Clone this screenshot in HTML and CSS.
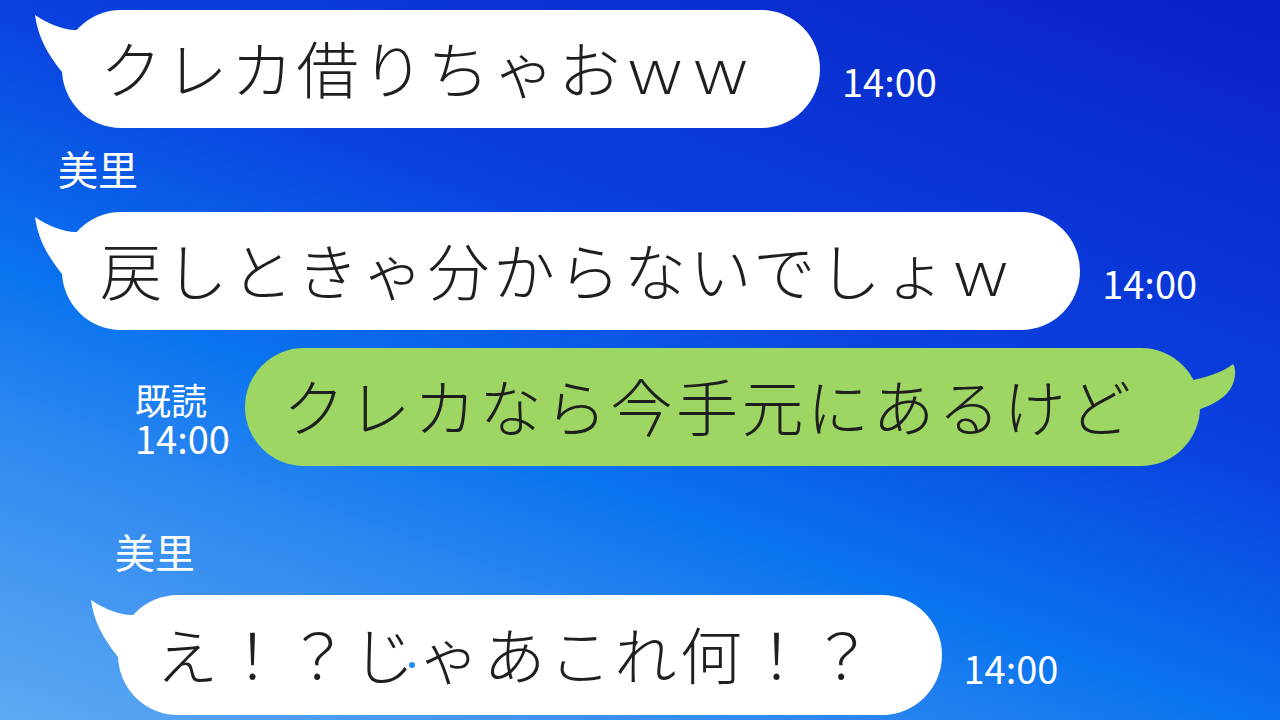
FILE: index.html
```html
<!DOCTYPE html>
<html lang="ja">
<head>
<meta charset="utf-8">
<title>chat</title>
<link rel="stylesheet" href="styles.css">
</head>
<body>
<main class="chat">
  <div class="row r1">
    <div class="bubble white">
      <svg class="tail-l" viewBox="0 0 80 62" aria-hidden="true"><path d="M3 5 C15 13 30 20 44 20 C54 20 62 12 74 5 L80 62 L30 62 C14 42 6 26 3 5 Z"/></svg>
      クレカ借りちゃおｗｗ
    </div>
    <span class="time">14:00</span>
  </div>
  <div class="name n1">美里</div>
  <div class="row r2">
    <div class="bubble white">
      <svg class="tail-l" viewBox="0 0 80 62" aria-hidden="true"><path d="M3 5 C15 13 30 20 44 20 C54 20 62 12 74 5 L80 62 L30 62 C14 42 6 26 3 5 Z"/></svg>
      戻しときゃ分からないでしょｗ
    </div>
    <span class="time">14:00</span>
  </div>
  <div class="row out">
    <div class="meta"><span class="read">既読</span><span class="time-s">14:00</span></div>
    <div class="bubble green">
      <svg class="tail-r" viewBox="0 0 80 70" aria-hidden="true"><path d="M33 32 C52 28 66 22 73 16 C76 20 76 30 72 38 C66 50 54 56 38 62 L20 62 L20 30 Z"/></svg>
      クレカなら今手元にあるけど
    </div>
  </div>
  <div class="name n2">美里</div>
  <div class="row r4">
    <div class="bubble white tall">
      <svg class="tail-l" viewBox="0 0 80 62" aria-hidden="true"><path d="M3 5 C15 13 30 20 44 20 C54 20 62 12 74 5 L80 62 L30 62 C14 42 6 26 3 5 Z"/></svg>
      え！？じゃあこれ何！？
      <span class="dot"></span>
    </div>
    <span class="time">14:00</span>
  </div>
</main>
</body>
</html>
```

FILE: styles.css
```css
html, body {
  margin: 0;
  padding: 0;
}
body {
  width: 1280px;
  height: 720px;
  overflow: hidden;
  font-family: "Noto Sans CJK JP", "Noto Sans", sans-serif;
  background: linear-gradient(20deg, #5eaaf2 0%, #2e88f0 25%, #0a74ef 38%, #0a42df 60%, #0a20c6 100%);
}
.chat {
  display: flex;
  flex-direction: column;
  align-items: flex-start;
  padding-top: 10px;
}
.row {
  display: flex;
  align-items: flex-end;
}
.r1 { margin-left: 62px; }
.r2 { margin-left: 62px; margin-top: 24px; }
.out { margin-left: 135px; margin-top: 18px; }
.r4 { margin-left: 118px; margin-top: 24px; }

.bubble {
  position: relative;
  isolation: isolate;
  height: 118px;
  box-sizing: border-box;
  display: flex;
  align-items: center;
  padding: 0 65px 4px 38px;
  border-radius: 59px;
  font-size: 62px;
  font-weight: 300;
  letter-spacing: 3.5px;
  line-height: 1;
  color: #1f1f1f;
  white-space: nowrap;
}
.bubble.tall { height: 120px; border-radius: 60px; }
.white { background: #ffffff; }
.green { background: #9dd663; }

.tail-l {
  position: absolute;
  left: -30px;
  top: 0;
  width: 80px;
  height: 62px;
  z-index: -1;
  fill: #ffffff;
}
.tail-r {
  position: absolute;
  right: -40px;
  top: 0;
  width: 80px;
  height: 70px;
  z-index: -1;
  fill: #9dd663;
}

.time {
  font-size: 38px;
  line-height: 1;
  color: #ffffff;
  margin-left: 22px;
  margin-bottom: 28px;
}
.name {
  font-size: 40px;
  line-height: 1;
  color: #ffffff;
}
.n1 { margin: 20px 0 0 58px; }
.n2 { margin: 65px 0 0 115px; }

.meta {
  width: 110px;
  display: flex;
  flex-direction: column;
  align-items: flex-start;
  margin-bottom: 9px;
  color: #ffffff;
  line-height: 1;
}
.read { font-size: 36px; }
.time-s { font-size: 38px; margin-top: 2px; }

.dot {
  position: absolute;
  left: 291px;
  top: 67px;
  width: 6px;
  height: 6px;
  border-radius: 50%;
  background: #1f8ff0;
}
```
